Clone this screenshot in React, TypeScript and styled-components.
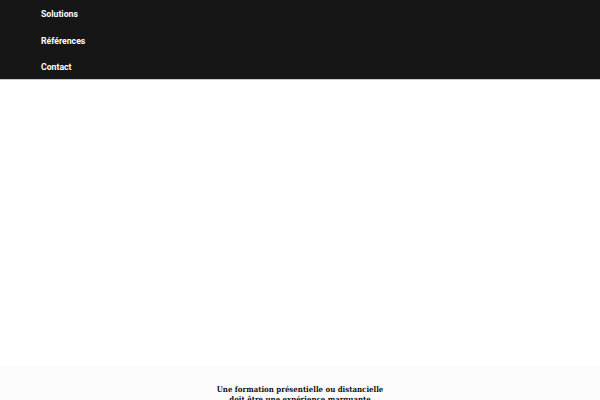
import styled, { createGlobalStyle } from "styled-components";

const GlobalStyle = createGlobalStyle`
    html, body {
        margin: 0;
        padding: 0;
        background: #ffffff;
    }
    body {
        font-family: Roboto, "Liberation Sans", sans-serif;
    }
`;

const navItems = ["Solutions", "Références", "Contact"];

export default function App() {
    return (
        <>
            <GlobalStyle/>
            <Page>
                <NavBar>
                    <NavList>
                        {navItems.map(item => (
                            <NavItem key={item}>
                                <NavLink href="#">{item}</NavLink>
                            </NavItem>
                        ))}
                    </NavList>
                </NavBar>
                <Hero/>
                <Intro>
                    <IntroTitle>
                        Une formation présentielle ou distancielle<br/>
                        doit être une expérience marquante
                    </IntroTitle>
                </Intro>
            </Page>
        </>
    );
}

const Page = styled.div`
    width: 600px;
    height: 400px;
    overflow: hidden;
    display: flex;
    flex-direction: column;
`;

const NavBar = styled.nav`
    height: 79px;
    flex-shrink: 0;
    background-color: #161616;
    border-bottom: 1px solid #c8c8c8;
`;

const NavList = styled.ul`
    list-style: none;
    margin: 0;
    padding: 1px 0 0 41px;
    display: flex;
    flex-direction: column;
`;

const NavItem = styled.li`
    height: 26.5px;
    display: flex;
    align-items: center;
`;

const NavLink = styled.a`
    color: #ffffff;
    font-size: 8.7px;
    font-weight: 700;
    text-decoration: none;
`;

const Hero = styled.section`
    height: 286px;
    flex-shrink: 0;
    background: #ffffff;
`;

const Intro = styled.section`
    flex: 1;
    background: #fcfcfc;
    display: flex;
    justify-content: center;
    padding-top: 19px;
`;

const IntroTitle = styled.h2`
    margin: 0;
    font-family: "DejaVu Serif Condensed", "DejaVu Serif", serif;
    font-stretch: condensed;
    font-size: 7.8px;
    font-weight: 700;
    line-height: 10px;
    color: #111111;
    text-align: center;
`;
